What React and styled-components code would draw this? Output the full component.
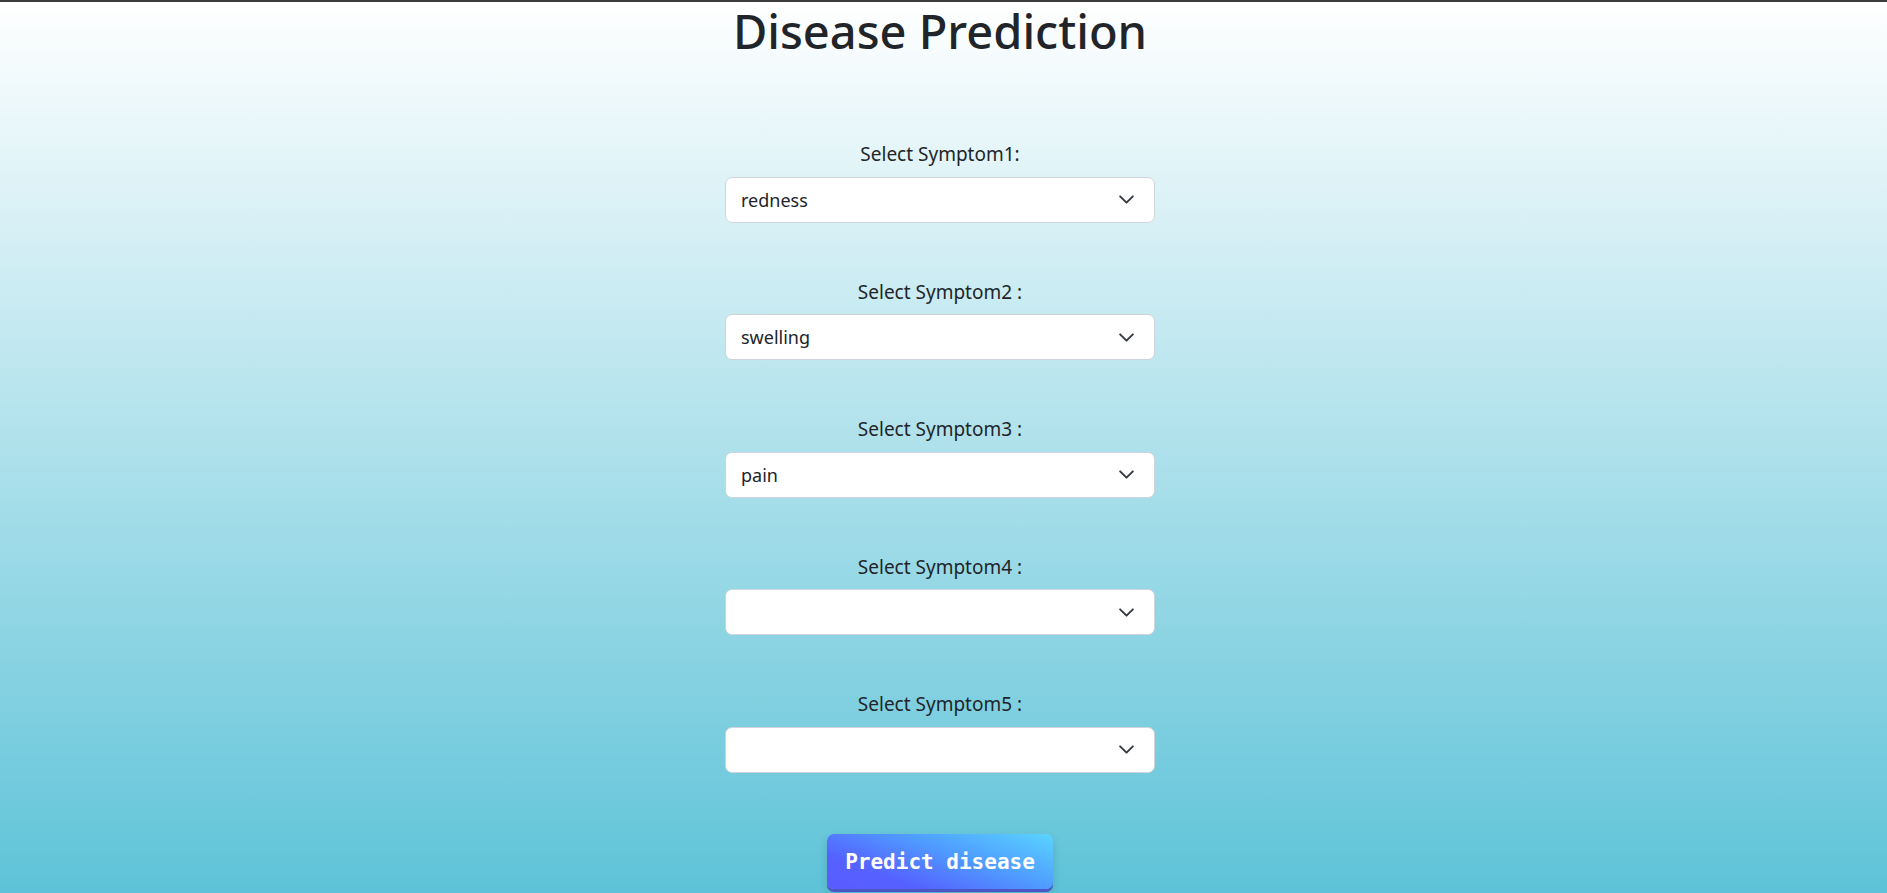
import styled, { createGlobalStyle } from 'styled-components';

const symptoms = [
  { label: 'Select Symptom1:', value: 'redness' },
  { label: 'Select Symptom2 :', value: 'swelling' },
  { label: 'Select Symptom3 :', value: 'pain' },
  { label: 'Select Symptom4 :', value: '' },
  { label: 'Select Symptom5 :', value: '' },
];

function App() {
  return (
    <>
      <GlobalStyle />
      <Page>
        <Title>Disease Prediction</Title>
        <Form>
          {symptoms.map((s) => (
            <Field key={s.label}>
              <Label>{s.label}</Label>
              <SelectBox>
                <SelectText>{s.value}</SelectText>
                <Chevron viewBox="0 0 16 16">
                  <path d="M2 5l6 6 6-6" fill="none" stroke="#343a40" strokeWidth="1.8" strokeLinecap="round" strokeLinejoin="round" />
                </Chevron>
              </SelectBox>
            </Field>
          ))}
        </Form>
        <PredictButton>Predict disease</PredictButton>
      </Page>
    </>
  );
}

const GlobalStyle = createGlobalStyle`
  html, body {
    margin: 0;
    padding: 0;
    overflow: hidden;
  }
  body {
    font-family: "Noto Sans", "Open Sans", sans-serif;
    color: #212529;
  }
`;

const Page = styled.div`
  height: 100vh;
  box-sizing: border-box;
  border-top: 2px solid #3b3b3b;
  padding-right: 7px;
  background: linear-gradient(180deg, #ffffff 0%, #5ec3d8 100%);
  display: flex;
  flex-direction: column;
  align-items: center;
  overflow: hidden;
`;

const Title = styled.h1`
  margin: 0;
  padding-top: 1px;
  font-size: 47px;
  font-weight: 500;
  line-height: 1.2;
  color: #212529;
`;

const Form = styled.div`
  margin-top: 81px;
  display: flex;
  flex-direction: column;
  align-items: center;
  gap: 55px;
`;

const Field = styled.div`
  display: flex;
  flex-direction: column;
  align-items: center;
  gap: 8px;
`;

const Label = styled.label`
  font-size: 19px;
  line-height: 28.5px;
  color: #212529;
`;

const SelectBox = styled.div`
  width: 430px;
  height: 46px;
  box-sizing: border-box;
  background: #fff;
  border: 1px solid #ced4da;
  border-radius: 7px;
  display: flex;
  align-items: center;
  justify-content: space-between;
  padding: 0 19px 0 15px;
`;

const SelectText = styled.span`
  font-size: 18px;
  color: #212529;
`;

const Chevron = styled.svg`
  width: 17px;
  height: 17px;
`;

const PredictButton = styled.button`
  margin-top: 61px;
  width: 226px;
  height: 55px;
  padding-top: 3px;
  flex-shrink: 0;
  border: none;
  border-radius: 7px;
  background: linear-gradient(200deg, #5ad4ff 0%, #4f9cff 40%, #5562ff 75%, #5a5aff 100%);
  color: #fff;
  font-family: "DejaVu Sans Mono", "Liberation Mono", monospace;
  font-weight: bold;
  font-size: 21px;
  box-shadow: 0 3px 0 #4c55c4, 0 5px 10px rgba(0, 0, 0, 0.15);
  cursor: pointer;
`;

export default App;
